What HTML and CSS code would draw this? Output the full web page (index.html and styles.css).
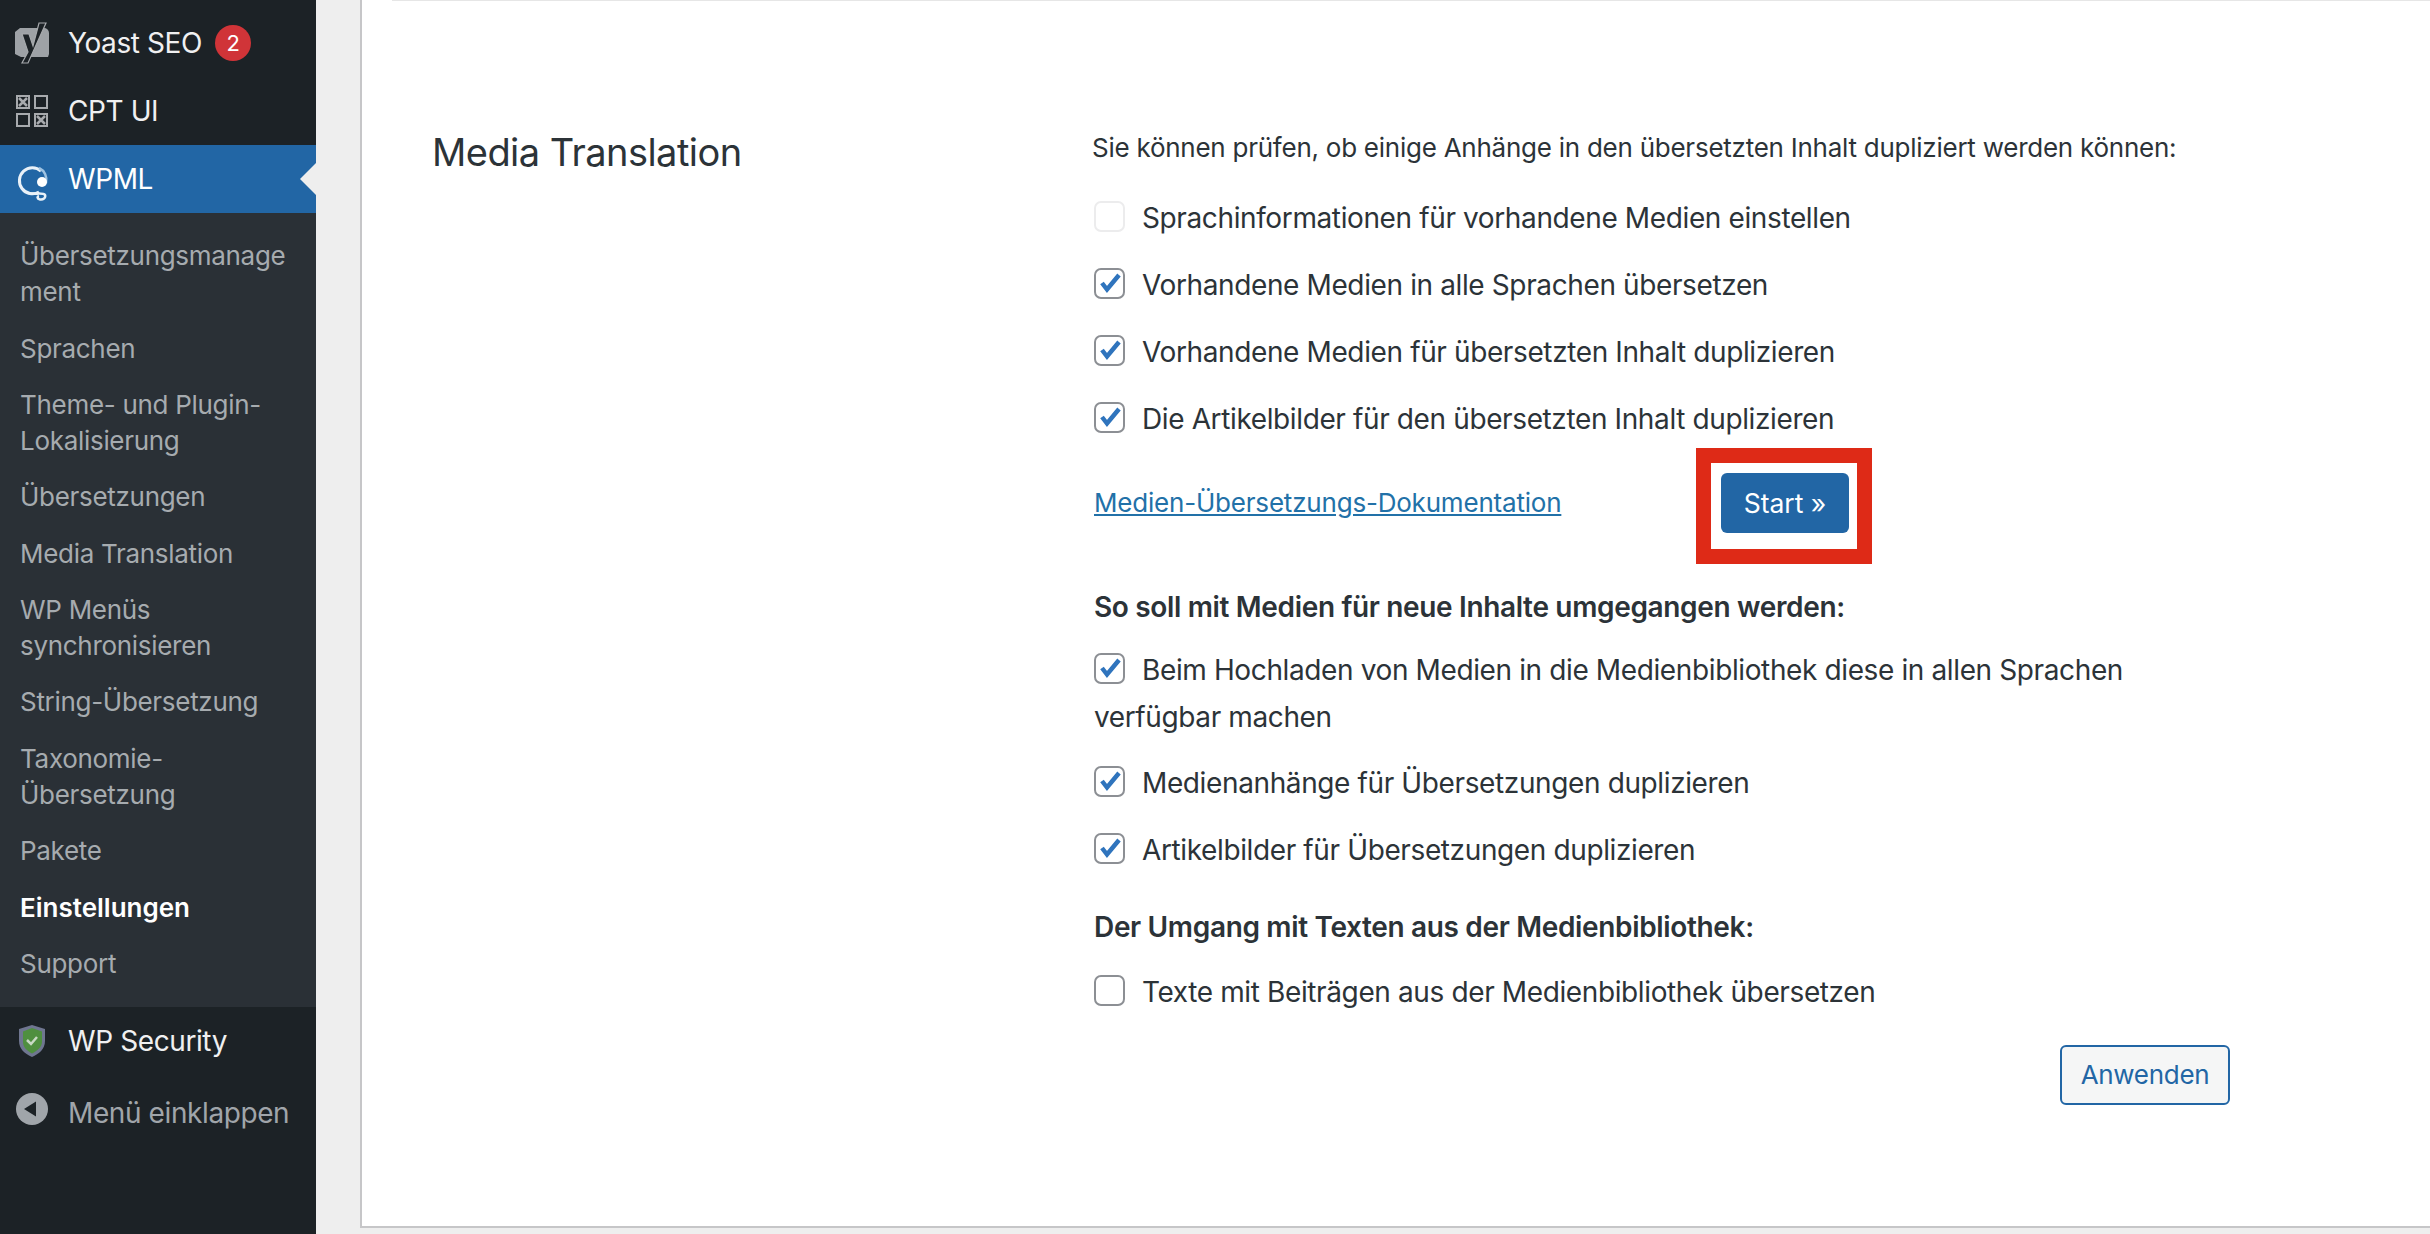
FILE: index.html
```html
<!DOCTYPE html>
<html lang="de">
<head>
  <meta charset="UTF-8" />
  <title>Media Translation</title>
  <link rel="stylesheet" href="styles.css">
</head>
<body>
  <nav class="sidebar">
    <ul class="menu">
      <li class="menu-item">
        <span class="menu-icon">
          <svg width="36" height="42" viewBox="0 0 36 42">
            <path d="M6 6h24a5 5 0 0 1 5 5v21l-1 3H7l-6-3V10z" fill="#9ea2a6"/>
            <path d="M25 1h7L14 41H8l6-11-6-18h7l4 12z" fill="#1c2226" stroke="#a7aaad" stroke-width="1.200"/>
          </svg>
        </span>
        <span>Yoast SEO</span><span class="badge">2</span>
      </li>
      <li class="menu-item">
        <span class="menu-icon">
          <svg width="32" height="32" viewBox="0 0 32 32" fill="none" stroke="#a7aaad" stroke-width="2">
            <rect x="1" y="1" width="12" height="12"/><rect x="19" y="1" width="12" height="12"/>
            <rect x="1" y="19" width="12" height="12"/><rect x="19" y="19" width="12" height="12"/>
            <path d="M3 3l8 8M11 3l-8 8M21 21l8 8M29 21l-8 8" stroke-width="2.500"/>
          </svg>
        </span>
        <span>CPT UI</span>
      </li>
      <li class="menu-item is-active">
        <span class="menu-icon">
          <svg width="34" height="44" viewBox="0 0 34 44" fill="none">
            <path d="M26 14A13 13 0 1 0 24 35" stroke="#e9f1f8" stroke-width="3"/>
            <path d="M24 11a13 13 0 0 1 7 15" stroke="#9fc3e2" stroke-width="2.500"/>
            <circle cx="27" cy="25" r="5" fill="#fff"/>
            <path d="M13 36c6 2 15-1 17 2 1 3-2 5-5 4.500s-3-3-1-3.500" stroke="#e9f1f8" stroke-width="2.500"/>
          </svg>
        </span>
        <span>WPML</span>
      </li>
    </ul>
    <ul class="submenu">
      <li>Übersetzungsmanage<br>ment</li>
      <li>Sprachen</li>
      <li>Theme- und Plugin-<br>Lokalisierung</li>
      <li>Übersetzungen</li>
      <li>Media Translation</li>
      <li>WP Menüs<br>synchronisieren</li>
      <li>String-Übersetzung</li>
      <li>Taxonomie-<br>Übersetzung</li>
      <li>Pakete</li>
      <li class="is-current">Einstellungen</li>
      <li>Support</li>
    </ul>
    <ul class="menu">
      <li class="menu-item">
        <span class="menu-icon">
          <svg width="26" height="32" viewBox="0 0 26 32">
            <path d="M13 0l13 4v12c0 8-6 13-13 16C6 29 0 24 0 16V4z" fill="#6f7690"/>
            <path d="M13 3l10 3.500V17c0 5-5 9-10 11.500C8 26 4 22 4 17V6.500z" fill="#4f8f3f"/>
            <path d="M8 15l4 4 6-7" fill="none" stroke="#c9d9c4" stroke-width="2.500"/>
          </svg>
        </span>
        <span>WP Security</span>
      </li>
      <li class="menu-item is-muted">
        <span class="menu-icon">
          <svg class="collapse-icon" width="32" height="32" viewBox="0 0 32 32">
            <circle cx="16" cy="16" r="16" fill="#a0a5aa"/>
            <path d="M8 16l12-7.500v15z" fill="#1c2226"/>
          </svg>
        </span>
        <span>Menü einklappen</span>
      </li>
    </ul>
  </nav>

  <main class="content">
    <section class="panel">
      <div class="panel-inner">
        <h2 class="panel-title">Media Translation</h2>
        <div class="panel-body">
          <p class="intro">Sie können prüfen, ob einige Anhänge in den übersetzten Inhalt dupliziert werden können:</p>
          <label class="check-row"><span class="box is-disabled"></span>Sprachinformationen für vorhandene Medien einstellen</label>
          <label class="check-row"><span class="box is-checked"></span>Vorhandene Medien in alle Sprachen übersetzen</label>
          <label class="check-row"><span class="box is-checked"></span>Vorhandene Medien für übersetzten Inhalt duplizieren</label>
          <label class="check-row"><span class="box is-checked"></span>Die Artikelbilder für den übersetzten Inhalt duplizieren</label>
          <div class="action-row">
            <a class="doc-link" href="#">Medien-Übersetzungs-Dokumentation</a>
            <span class="highlight"><button class="btn-primary">Start »</button></span>
          </div>
          <h3 class="group-title">So soll mit Medien für neue Inhalte umgegangen werden:</h3>
          <label class="check-row wrapped"><span class="box is-checked"></span>Beim Hochladen von Medien in die Medienbibliothek diese in allen Sprachen verfügbar machen</label>
          <label class="check-row"><span class="box is-checked"></span>Medienanhänge für Übersetzungen duplizieren</label>
          <label class="check-row"><span class="box is-checked"></span>Artikelbilder für Übersetzungen duplizieren</label>
          <h3 class="group-title spaced">Der Umgang mit Texten aus der Medienbibliothek:</h3>
          <label class="check-row single"><span class="box"></span>Texte mit Beiträgen aus der Medienbibliothek übersetzen</label>
          <div class="apply-row"><button class="btn-secondary">Anwenden</button></div>
        </div>
      </div>
    </section>
  </main>
</body>
</html>
```

FILE: styles.css
```css
* {
  box-sizing: border-box;
}
html, body {
  margin: 0;
  height: 100%;
  overflow: hidden;
}
body {
  display: flex;
  background-color: #eeeeee;
  font-family: Inter, "Noto Sans", sans-serif;
  color: #2c3338;
}
ul {
  list-style: none;
  margin: 0;
  padding: 0;
}

/* sidebar */
.sidebar {
  width: 316px;
  flex-shrink: 0;
  background-color: #1c2226;
  padding-top: 9px;
}
.menu-item {
  position: relative;
  display: flex;
  align-items: center;
  height: 68px;
  font-size: 28px;
  letter-spacing: -0.4px;
  color: #f0f0f1;
}
.menu-icon {
  display: flex;
  justify-content: center;
  align-items: center;
  width: 68px;
  padding-right: 4px;
  flex-shrink: 0;
}
.badge {
  width: 36px;
  height: 36px;
  margin-left: 13px;
  border-radius: 50%;
  background-color: #d03438;
  color: #fff;
  font-size: 22px;
  line-height: 36px;
  text-align: center;
}
.is-active {
  background-color: #2266a5;
  color: #fff;
}
.is-active::after {
  content: "";
  position: absolute;
  right: 0;
  top: 18px;
  border: 16px solid transparent;
  border-right-color: #eeeeee;
  border-left-width: 0;
}
.submenu {
  background-color: #2a3036;
  padding: 15px 0 15px;
  font-size: 26px;
  line-height: 36px;
  letter-spacing: -0.3px;
  color: #a6abaf;
}
.submenu li {
  padding: 10.2px 20px;
  white-space: nowrap;
}
.submenu .is-current {
  color: #fff;
  font-weight: 600;
  letter-spacing: 0;
}
.is-muted {
  margin-top: 4px;
  color: #a0a5aa;
}
.collapse-icon {
  margin-bottom: 8px;
}

/* main panel */
.content {
  flex: 1;
  min-width: 0;
  padding-left: 44px;
}
.panel {
  height: 1228px;
  background-color: #fff;
  border-left: 2px solid #c6c6c8;
  border-bottom: 2px solid #c6c6c8;
  padding-left: 30px;
}
.panel-inner {
  display: flex;
  border-top: 1px solid #e6e6e6;
  padding-top: 125px;
  padding-left: 40px;
}
.panel-title {
  width: 662px;
  flex-shrink: 0;
  margin: 0;
  font-size: 38px;
  font-weight: 400;
  line-height: 52px;
  letter-spacing: -0.55px;
}
.panel-body {
  width: 1136px;
}
.intro {
  margin: 1.5px 0 17px -2px;
  font-size: 26px;
  line-height: 40px;
  letter-spacing: -0.25px;
  white-space: nowrap;
}
.check-row {
  display: block;
  padding: 10px 0;
  font-size: 28px;
  line-height: 47px;
  letter-spacing: -0.38px;
}
.wrapped {
  padding-bottom: 9px;
}
.single {
  margin-top: 12px;
}
.box {
  display: inline-block;
  width: 31px;
  height: 31px;
  margin-right: 17px;
  vertical-align: -4px;
  border: 2px solid #8c8f94;
  border-radius: 7px;
  background-color: #fff;
}
.box.is-disabled {
  border-color: #ececed;
}
.box.is-checked {
  background-image: url("data:image/svg+xml,%3Csvg xmlns='http://www.w3.org/2000/svg' width='27' height='27'%3E%3Cpath d='M6 13l5 6.500L23 5' fill='none' stroke='%232f74bd' stroke-width='4.500'/%3E%3C/svg%3E");
}
.action-row {
  display: flex;
  align-items: center;
  margin-top: -5px;
  height: 116px;
}
.doc-link {
  width: 602px;
  padding-bottom: 6px;
  font-size: 26px;
  letter-spacing: -0.2px;
  color: #2271a8;
}
.highlight {
  display: inline-block;
  border: 15px solid #de2a17;
  padding: 10px 8px 16px 10px;
  height: 116px;
  width: 176px;
  background-color: #fff;
}
.btn-primary {
  display: block;
  width: 128px;
  height: 60px;
  padding: 0;
  border: 0;
  border-radius: 6px;
  background-color: #2266a5;
  color: #fff;
  font-family: inherit;
  font-size: 26.5px;
}
.group-title {
  margin: 23.5px 0 10px;
  font-size: 28px;
  font-weight: 600;
  line-height: 40px;
  letter-spacing: -0.34px;
}
.group-title.spaced {
  margin-top: 22.5px;
}
.apply-row {
  display: flex;
  justify-content: flex-end;
  margin-top: 19px;
}
.btn-secondary {
  width: 170px;
  height: 60px;
  padding: 0;
  border: 2px solid #2266a5;
  border-radius: 6px;
  background-color: #f5f6f6;
  color: #2266a5;
  font-family: inherit;
  font-size: 26px;
  letter-spacing: -0.3px;
}
```
